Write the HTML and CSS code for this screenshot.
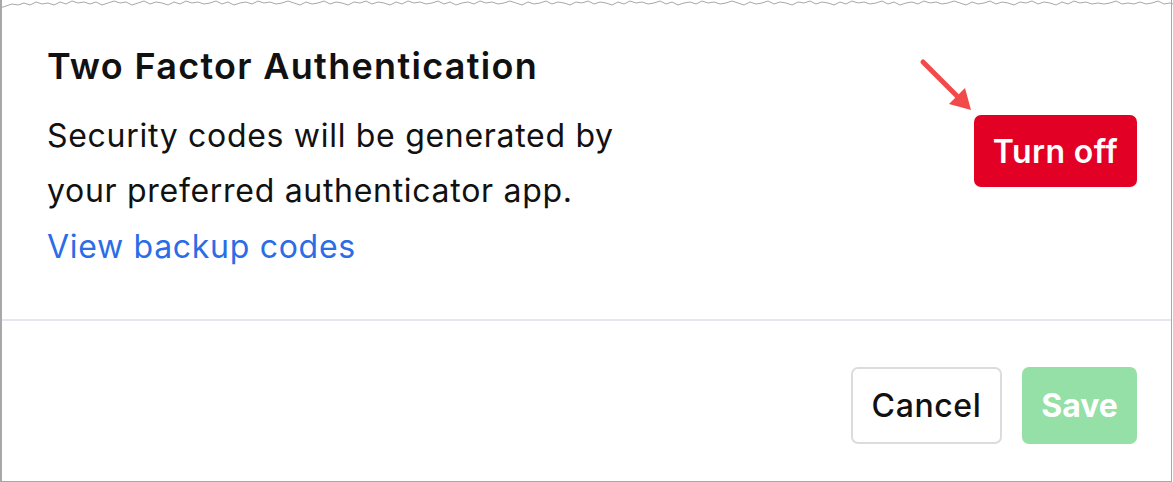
FILE: index.html
```html
<!DOCTYPE html>
<html lang="en">
<head>
    <meta charset="UTF-8">
    <title>Two Factor Authentication</title>
    <link rel="stylesheet" href="styles.css">
</head>
<body>
    <div class="frame">
        <svg class="torn" width="1173" height="9" viewBox="0 0 1173 9">
            <polyline fill="none" stroke="#a8a8a8" stroke-width="1" points="0,8 6,6 12,4 18,5 24,3 30,5 36,2 42,4 48,3 54,5 60,2 66,4 72,1 78,3 84,2 90,4 96,2 102,5 108,3 114,1 120,3 126,2 132,5 138,3 144,1 150,4 156,2 162,3 168,5 174,2 180,4 186,1 192,3 198,2 204,4 210,3 216,1 222,4 228,2 234,5 240,3 246,2 252,4 258,1 264,3 270,2 276,4 282,3 288,1 294,3 300,5 306,2 312,4 318,3 324,1 330,4 336,2 342,3 348,5 354,2 360,3 366,1 372,4 378,2 384,3 390,5 396,2 402,4 408,1 414,3 420,2 426,4 432,3 438,1 444,4 450,2 456,5 462,3 468,2 474,4 480,1 486,3 492,2 498,4 504,3 510,1 516,3 522,5 528,2 534,4 540,3 546,1 552,4 558,2 564,3 570,5 576,2 582,3 588,1 594,4 600,2 606,3 612,5 618,2 624,4 630,1 636,3 642,2 648,4 654,3 660,1 666,4 672,2 678,5 684,3 690,2 696,4 702,1 708,3 714,2 720,4 726,3 732,1 738,3 744,5 750,2 756,4 762,3 768,1 774,4 780,2 786,3 792,5 798,2 804,3 810,1 816,4 822,2 828,3 834,5 840,2 846,4 852,1 858,3 864,2 870,4 876,3 882,1 888,4 894,2 900,5 906,3 912,2 918,4 924,1 930,3 936,2 942,4 948,3 954,1 960,3 966,5 972,2 978,4 984,3 990,1 996,4 1002,2 1008,3 1014,5 1020,2 1026,3 1032,1 1038,4 1044,2 1050,3 1056,5 1062,2 1068,4 1074,1 1080,3 1086,2 1092,4 1098,3 1104,4 1110,3 1116,1 1122,4 1128,3 1134,4 1140,2 1146,4 1152,3 1158,1 1164,4 1170,3 1173,4"/>
        </svg>

        <section class="setting">
            <div class="setting-text">
                <h2 class="title">Two Factor Authentication</h2>
                <p class="desc">Security codes will be generated by<br>your preferred authenticator app.</p>
                <a class="link" href="#">View backup codes</a>
            </div>
            <div class="setting-action">
                <svg class="arrow" width="60" height="60" viewBox="0 0 60 60">
                    <line x1="5" y1="5" x2="44" y2="44" stroke="#f24a4a" stroke-width="5" stroke-linecap="round"/>
                    <polygon points="53,53 31,47 47,31" fill="#f24a4a"/>
                </svg>
                <button class="btn btn-danger">Turn off</button>
            </div>
        </section>

        <footer class="actions">
            <button class="btn btn-outline">Cancel</button>
            <button class="btn btn-save">Save</button>
        </footer>
    </div>
</body>
</html>
```

FILE: styles.css
```css
/* General Styles */
body {
    margin: 0;
    padding: 0;
    background-color: #fff;
    font-family: Inter, "Noto Sans", sans-serif;
    color: #111;
}

.frame {
    width: 1172px;
    height: 482px;
    box-sizing: border-box;
    border-left: 2px solid #a8a8a8;
    border-right: 1px solid #a8a8a8;
    border-bottom: 1px solid #a8a8a8;
    display: flex;
    flex-direction: column;
}

.torn {
    display: block;
    margin-left: -2px;
    flex: none;
}

/* Setting Section */
.setting {
    height: 310px;
    flex: none;
    border-bottom: 2px solid #e6e6ee;
    display: flex;
    justify-content: space-between;
    padding: 0 34px 0 45px;
}

.title {
    margin: 35px 0 0;
    font-size: 36px;
    line-height: 44px;
    font-weight: 600;
    letter-spacing: 1.3px;
}

.desc {
    margin: 20px 0 0;
    font-size: 32px;
    line-height: 55px;
    letter-spacing: 0.7px;
}

.link {
    display: block;
    font-size: 32px;
    line-height: 57px;
    letter-spacing: 0.7px;
    color: #2a6de6;
    text-decoration: none;
}

.setting-action {
    position: relative;
    padding-top: 106px;
}

.arrow {
    position: absolute;
    left: -56px;
    top: 48px;
}

/* Buttons */
.btn {
    font-family: Inter, "Noto Sans", sans-serif;
    border-radius: 7px;
    cursor: pointer;
    padding: 0;
}

.btn-danger {
    width: 163px;
    height: 72px;
    border: none;
    background-color: #e20025;
    color: #fff;
    font-size: 32px;
    font-weight: 600;
    letter-spacing: 0.4px;
}

.actions {
    display: flex;
    justify-content: flex-end;
    gap: 20px;
    padding: 46px 34px 0 0;
}

.btn-outline {
    width: 151px;
    height: 77px;
    background: #fff;
    border: 2px solid #dcdcdc;
    color: #111;
    font-size: 32px;
    font-weight: 500;
    letter-spacing: 0.6px;
}

.btn-save {
    width: 115px;
    height: 77px;
    border: none;
    background-color: #95e0a7;
    color: #fff;
    font-size: 32px;
    font-weight: 700;
}
```
